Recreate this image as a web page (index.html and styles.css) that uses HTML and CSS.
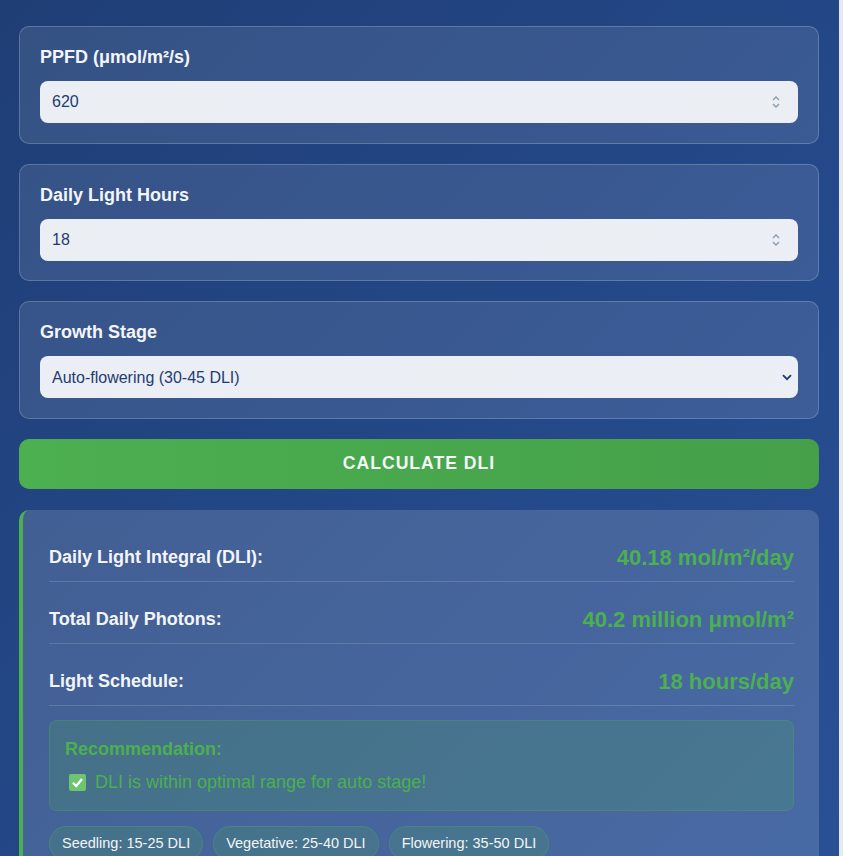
FILE: index.html
```html
<!DOCTYPE html>
<html lang="en">
<head>
<meta charset="utf-8">
<title>DLI Calculator</title>
<link rel="stylesheet" href="styles.css">
</head>
<body>
<div class="page">
  <main class="calc">
    <section class="card">
      <label class="field-label" for="ppfd">PPFD (μmol/m²/s)</label>
      <div class="control">
        <input class="field" id="ppfd" type="text" value="620">
        <svg class="spin" width="10" height="16" viewBox="0 0 10 16" aria-hidden="true"><path d="M2 6 L5 3 L8 6" fill="none" stroke="#8c9bb0" stroke-width="1.4"/><path d="M2 10 L5 13 L8 10" fill="none" stroke="#8c9bb0" stroke-width="1.4"/></svg>
      </div>
    </section>

    <section class="card">
      <label class="field-label" for="hours">Daily Light Hours</label>
      <div class="control">
        <input class="field" id="hours" type="text" value="18">
        <svg class="spin" width="10" height="16" viewBox="0 0 10 16" aria-hidden="true"><path d="M2 6 L5 3 L8 6" fill="none" stroke="#8c9bb0" stroke-width="1.4"/><path d="M2 10 L5 13 L8 10" fill="none" stroke="#8c9bb0" stroke-width="1.4"/></svg>
      </div>
    </section>

    <section class="card">
      <label class="field-label" for="stage">Growth Stage</label>
      <div class="control">
        <select class="field select" id="stage">
          <option>Auto-flowering (30-45 DLI)</option>
        </select>
        <svg class="caret" width="10" height="7" viewBox="0 0 10 7" aria-hidden="true"><path d="M1 1.2 L5 5.2 L9 1.2" fill="none" stroke="#1e3c72" stroke-width="1.8"/></svg>
      </div>
    </section>

    <button class="calc-btn" type="button">Calculate DLI</button>

    <section class="results">
      <div class="row">
        <span class="row-label">Daily Light Integral (DLI):</span>
        <span class="row-value">40.18 mol/m²/day</span>
      </div>
      <div class="row">
        <span class="row-label">Total Daily Photons:</span>
        <span class="row-value">40.2 million μmol/m²</span>
      </div>
      <div class="row">
        <span class="row-label">Light Schedule:</span>
        <span class="row-value">18 hours/day</span>
      </div>

      <div class="rec">
        <div class="rec-title">Recommendation:</div>
        <div class="rec-text">
          <svg class="check" width="17" height="17" viewBox="0 0 17 17" aria-hidden="true"><rect x="0" y="0" width="17" height="17" rx="2" fill="#6fc46f"/><path d="M4 8.8 L7.2 12 L13 5" fill="none" stroke="#ffffff" stroke-width="2.2"/></svg>
          <span>DLI is within optimal range for auto stage!</span>
        </div>
      </div>

      <div class="badges">
        <span class="badge">Seedling: 15-25 DLI</span>
        <span class="badge">Vegetative: 25-40 DLI</span>
        <span class="badge">Flowering: 35-50 DLI</span>
      </div>
    </section>
  </main>
</div>
</body>
</html>
```

FILE: styles.css
```css
html, body {
  margin: 0;
  padding: 0;
  overflow: hidden;
  background: #e6e9ee;
}

body {
  font-family: "Liberation Sans", Arial, sans-serif;
  color: #f3f5f8;
}

.page {
  width: 839px;
  min-height: 1000px;
  background: linear-gradient(135deg, #1f3e76 0%, #244888 50%, #2a5298 100%);
  padding: 26px 20px 40px 19px;
  box-sizing: border-box;
}

.calc {
  width: 800px;
  display: flex;
  flex-direction: column;
}

.card {
  background: rgba(255, 255, 255, 0.1);
  border: 1px solid rgba(255, 255, 255, 0.2);
  border-radius: 10px;
  padding: 20px 20px 19.5px;
  margin-bottom: 20px;
}

.field-label {
  display: block;
  font-size: 18px;
  line-height: 21px;
  font-weight: bold;
  color: #f3f5f8;
  margin-bottom: 13px;
}

.control {
  position: relative;
}

.field {
  display: block;
  width: 100%;
  box-sizing: border-box;
  height: 42px;
  padding: 0 12px;
  border: none;
  border-radius: 8px;
  background: rgba(255, 255, 255, 0.9);
  font-family: "Liberation Sans", Arial, sans-serif;
  font-size: 16px;
  color: #1e3c72;
  outline: none;
}

.select {
  appearance: none;
  -webkit-appearance: none;
}

.spin {
  position: absolute;
  right: 17px;
  top: 13px;
}

.caret {
  position: absolute;
  right: 6px;
  top: 18px;
}

.calc-btn {
  display: block;
  width: 100%;
  height: 50px;
  border: none;
  border-radius: 10px;
  background: linear-gradient(90deg, #4caf50, #45a049);
  color: #f4f6f8;
  font-family: "Liberation Sans", Arial, sans-serif;
  font-size: 17.6px;
  font-weight: bold;
  letter-spacing: 1px;
  text-transform: uppercase;
  margin-bottom: 21px;
  padding: 0;
}

.results {
  background: rgba(255, 255, 255, 0.15);
  border-left: 4px solid #4caf50;
  border-radius: 10px;
  padding: 24px 25px 30px 26px;
}

.row {
  display: flex;
  justify-content: space-between;
  align-items: center;
  padding: 11px 0;
  border-bottom: 1px solid rgba(255, 255, 255, 0.15);
  margin-bottom: 14px;
  min-height: 25px;
}

.row-label {
  font-size: 18px;
  font-weight: bold;
  color: #f3f5f8;
}

.row-value {
  font-size: 22px;
  line-height: 25px;
  font-weight: bold;
  color: #4caf50;
}

.rec {
  background: rgba(76, 175, 80, 0.2);
  border: 1px solid rgba(76, 175, 80, 0.3);
  border-radius: 8px;
  padding: 18px 15px 17px;
  margin-bottom: 15px;
}

.rec-title {
  font-size: 18px;
  line-height: 21px;
  font-weight: bold;
  color: #4caf50;
  margin-bottom: 12px;
}

.rec-text {
  display: flex;
  align-items: center;
  gap: 9px;
  font-size: 18px;
  line-height: 21px;
  color: #4caf50;
  padding-left: 4px;
}

.check {
  flex: none;
}

.badges {
  display: flex;
  gap: 10px;
}

.badge {
  font-size: 14.5px;
  line-height: 17px;
  color: #f3f5f8;
  padding: 8px 12px;
  border-radius: 20px;
  background: rgba(76, 175, 80, 0.2);
  border: 1px solid rgba(76, 175, 80, 0.3);
}
```
